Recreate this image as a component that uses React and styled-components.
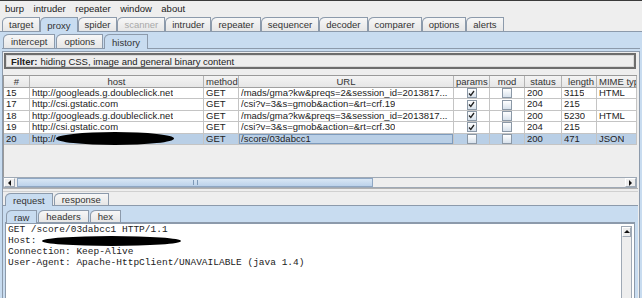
import React from 'react'
import styled, { createGlobalStyle, css } from 'styled-components'

const GlobalStyle = createGlobalStyle`
  html, body {
    margin: 0;
    padding: 0;
    background: #eeeeee;
  }
  body {
    font-family: 'Liberation Sans', Arial, sans-serif;
    font-size: 9.5px;
    color: #333333;
  }
`

const BLUE = '#c8dcf0'
const EDGE = '#8c9aab'

const Window = styled.div`
  width: 642px;
  height: 298px;
  overflow: hidden;
  display: flex;
  flex-direction: column;
  background: #eeeeee;
`

const MenuBar = styled.div`
  height: 16px;
  box-sizing: border-box;
  border-top: 1px solid #3a3a3a;
  display: flex;
  align-items: center;
  gap: 9.5px;
  padding-left: 5px;
  color: #222222;
`

const TabRow = styled.div`
  display: flex;
  align-items: flex-end;
  flex-shrink: 0;
  height: ${p => p.$h}px;
  padding-left: ${p => p.$indent}px;
  gap: ${p => p.$gap ?? 1}px;
  position: relative;
  z-index: 1;
`

const Tab = styled.div`
  height: ${p => p.$h - 1}px;
  padding: 0 ${p => p.$pad || 7}px;
  display: flex;
  align-items: center;
  border: 1px solid ${EDGE};
  border-bottom: none;
  border-top-left-radius: 6px 5px;
  background: linear-gradient(#f7f7f7, #e6e6e6);
  color: #333333;
  white-space: nowrap;
  ${p => p.$selected && css`
    background: ${BLUE};
    height: ${p.$h}px;
    margin-bottom: -1px;
  `}
  ${p => p.$disabled && css`
    color: #a9a9a9;
  `}
`

const Pane = styled.div`
  flex: 1;
  min-height: 0;
  display: flex;
  flex-direction: column;
  background: ${BLUE};
  border-top: 1px solid ${EDGE};
  padding: ${p => p.$pad};
`

const Body = styled.div`
  flex: 1;
  min-height: 0;
  display: flex;
  flex-direction: column;
  background: #eeeeee;
  border: 1px solid ${EDGE};
  border-bottom: none;
  padding: 1px 1px 0 0;
`

const FilterBox = styled.div`
  height: 16px;
  box-sizing: border-box;
  margin-left: 1px;
  width: 632px;
  border: 2px solid #6d6d6d;
  box-shadow: inset 0 0 0 1px #d8d8d8;
  display: flex;
  align-items: center;
  padding-left: 5px;
  color: #222222;
  b {
    margin-right: 3px;
  }
`

const TableViewport = styled.div`
  margin-top: 6px;
  height: 102px;
  width: 634px;
  box-sizing: border-box;
  border-top: 1px solid #9a9a9a;
  border-left: 1px solid #9a9a9a;
`

const Grid = styled.div`
  display: grid;
  grid-template-columns: ${p => p.$cols};
`

const HeadCell = styled.div`
  height: 12px;
  box-sizing: border-box;
  border-right: 1px solid #b4b4b4;
  border-bottom: 1px solid #a0a0a0;
  background: linear-gradient(#f4f4f4, #e6e6e6);
  color: #333333;
  text-align: ${p => p.$align};
  line-height: 11px;
  padding: 0 2px;
  white-space: nowrap;
  overflow: hidden;
`

const Cell = styled.div`
  height: 11.4px;
  box-sizing: border-box;
  border-right: 1px solid #c4c4c4;
  border-bottom: 1px solid #c4c4c4;
  background: ${p => (p.$selected ? '#b9cfe6' : '#ffffff')};
  color: #222222;
  line-height: 10.4px;
  padding: 0 2px;
  white-space: nowrap;
  overflow: visible;
  display: flex;
  align-items: center;
  justify-content: ${p => (p.$center ? 'center' : 'flex-start')};
  ${p => p.$focus && css`
    box-shadow: inset 0 0 0 1px #7d9bbd;
  `}
`

const Clip = styled.span`
  overflow: hidden;
  text-overflow: clip;
  display: block;
`

const Box = styled.span`
  width: 8px;
  height: 8px;
  border: 1px solid #8b98a6;
  background: linear-gradient(#ffffff, #d8e2ec);
  display: flex;
  align-items: center;
  justify-content: center;
`

const Redacted = styled.span`
  display: inline-block;
  width: ${p => p.$w}px;
  height: ${p => p.$h}px;
  background: #000000;
  border-radius: 50%;
  flex-shrink: 0;
`

const HScroll = styled.div`
  height: 11px;
  width: 634px;
  box-sizing: border-box;
  border: 1px solid #9fa9b5;
  background: #eeeeee;
  display: flex;
  align-items: stretch;
`

const ArrowBtn = styled.div`
  width: 11px;
  box-sizing: border-box;
  border: 1px solid #ffffff;
  border-right-color: #9fa9b5;
  border-bottom-color: #9fa9b5;
  display: flex;
  align-items: center;
  justify-content: center;
  background: #eeeeee;
`

const Thumb = styled.div`
  width: 356px;
  margin-left: 2px;
  box-sizing: border-box;
  border: 1px solid #8fa7c3;
  background: linear-gradient(#d9e7f5, #bcd2ea);
  display: flex;
  align-items: center;
  justify-content: center;
`

const Track = styled.div`
  flex: 1;
`

const Grip = styled.span`
  width: 3px;
  height: 5px;
  border-left: 1px solid #7f9ab8;
  border-right: 1px solid #7f9ab8;
`

const Splitter = styled.div`
  height: 3px;
  flex-shrink: 0;
  border-bottom: 1px solid #d0d0d0;
  box-shadow: inset 0 2px 0 -1px #b0b0b0;
`

const Editor = styled.div`
  flex: 1;
  display: flex;
  background: #ffffff;
  border: 1px solid ${EDGE};
  border-bottom: none;
  min-height: 0;
`

const Text = styled.pre`
  flex: 1;
  margin: 0;
  padding: 0 2px;
  font-family: 'Liberation Mono', 'Courier New', monospace;
  font-size: 9.5px;
  line-height: 11px;
  color: #222222;
  div {
    display: flex;
    align-items: center;
    height: 11px;
  }
`

const VScroll = styled.div`
  width: 11px;
  margin: 2px 2px 0 0;
  box-sizing: border-box;
  border: 1px solid #9fa9b5;
  border-bottom: none;
  background: #eeeeee;
  display: flex;
  flex-direction: column;
`

const UpBtn = styled(ArrowBtn)`
  width: auto;
  height: 10px;
`

const Arrow = ({ dir }) => {
  const pts = {
    left: '4,0 4,6 1,3',
    right: '1,0 1,6 4,3',
    up: '0,4 6,4 3,1',
  }[dir]
  return (
    <svg width="6" height="6" viewBox="0 0 6 6">
      <polygon points={pts} fill="#111" />
    </svg>
  )
}

const Check = ({ on }) => (
  <Box>
    {on && (
      <svg width="7" height="7" viewBox="0 0 7 7">
        <path d="M1 3.5 L2.8 5.5 L6 1" stroke="#222" strokeWidth="1.3" fill="none" />
      </svg>
    )}
  </Box>
)

const columns = [
  { key: 'id', title: '#', width: 26, align: 'center' },
  { key: 'host', title: 'host', width: 174, align: 'center' },
  { key: 'method', title: 'method', width: 35, align: 'center' },
  { key: 'url', title: 'URL', width: 215, align: 'center' },
  { key: 'params', title: 'params', width: 36, align: 'center', check: true },
  { key: 'mod', title: 'mod', width: 35, align: 'center', check: true },
  { key: 'status', title: 'status', width: 37, align: 'center' },
  { key: 'length', title: 'length', width: 35, align: 'right' },
  { key: 'mime', title: 'MIME type', width: 40, align: 'left' },
]

const rows = [
  { id: 15, host: 'http://googleads.g.doubleclick.net', method: 'GET', url: '/mads/gma?kw&preqs=2&session_id=2013817...', params: true, mod: false, status: 200, length: 3115, mime: 'HTML' },
  { id: 17, host: 'http://csi.gstatic.com', method: 'GET', url: '/csi?v=3&s=gmob&action=&rt=crf.19', params: true, mod: false, status: 204, length: 215, mime: '' },
  { id: 18, host: 'http://googleads.g.doubleclick.net', method: 'GET', url: '/mads/gma?kw&preqs=3&session_id=2013817...', params: true, mod: false, status: 200, length: 5230, mime: 'HTML' },
  { id: 19, host: 'http://csi.gstatic.com', method: 'GET', url: '/csi?v=3&s=gmob&action=&rt=crf.30', params: true, mod: false, status: 204, length: 215, mime: '' },
  { id: 20, host: 'http://', method: 'GET', url: '/score/03dabcc1', params: false, mod: false, status: 200, length: 471, mime: 'JSON', selected: true, redact: true },
]

const menus = ['burp', 'intruder', 'repeater', 'window', 'about']
const mainTabs = ['target', 'proxy', 'spider', 'scanner', 'intruder', 'repeater', 'sequencer', 'decoder', 'comparer', 'options', 'alerts']

function HistoryTable() {
  const cols = columns.map(c => `${c.width}px`).join(' ')
  return (
    <TableViewport>
      <Grid $cols={cols}>
        {columns.map(c => (
          <HeadCell key={c.key} $align={c.align}>{c.title}</HeadCell>
        ))}
        {rows.map(r =>
          columns.map(c => (
            <Cell
              key={r.id + c.key}
              $selected={r.selected}
              $center={c.check}
              $focus={r.selected && c.key === 'url'}
            >
              {c.check ? (
                <Check on={r[c.key]} />
              ) : c.key === 'host' && r.redact ? (
                <>
                  {r.host}
                  <Redacted $w={118} $h={13} />
                </>
              ) : (
                <Clip>{r[c.key]}</Clip>
              )}
            </Cell>
          ))
        )}
      </Grid>
    </TableViewport>
  )
}

function App() {
  return (
    <>
      <GlobalStyle />
      <Window>
        <MenuBar>
          {menus.map(m => <span key={m}>{m}</span>)}
        </MenuBar>
        <TabRow $h={15} $indent={2} $gap={0}>
          {mainTabs.map(t => (
            <Tab key={t} $h={14} $pad={6} $selected={t === 'proxy'} $disabled={t === 'scanner'}>{t}</Tab>
          ))}
        </TabRow>
        <Pane $pad="1px 2px 0 2px">
          <TabRow $h={15} $indent={1}>
            <Tab $h={14}>intercept</Tab>
            <Tab $h={14}>options</Tab>
            <Tab $h={14} $selected>history</Tab>
          </TabRow>
          <Pane $pad="2px 0 0 0">
            <Body>
              <FilterBox>
                <b>Filter:</b> hiding CSS, image and general binary content
              </FilterBox>
              <HistoryTable />
              <HScroll>
                <ArrowBtn><Arrow dir="left" /></ArrowBtn>
                <Thumb><Grip /></Thumb>
                <Track />
                <ArrowBtn><Arrow dir="right" /></ArrowBtn>
              </HScroll>
              <Splitter />
              <TabRow $h={13} $indent={2}>
                <Tab $h={12} $selected>request</Tab>
                <Tab $h={12}>response</Tab>
              </TabRow>
              <Pane $pad="3px 3px 0 2px">
                <TabRow $h={13} $indent={1}>
                  <Tab $h={12} $selected>raw</Tab>
                  <Tab $h={12}>headers</Tab>
                  <Tab $h={12}>hex</Tab>
                </TabRow>
                <Pane $pad="0">
                  <Editor>
                    <Text>
                      <div>GET /score/03dabcc1 HTTP/1.1</div>
                      <div>Host: <Redacted $w={139} $h={10} /></div>
                      <div>Connection: Keep-Alive</div>
                      <div>User-Agent: Apache-HttpClient/UNAVAILABLE (java 1.4)</div>
                    </Text>
                    <VScroll>
                      <UpBtn><Arrow dir="up" /></UpBtn>
                    </VScroll>
                  </Editor>
                </Pane>
              </Pane>
            </Body>
          </Pane>
        </Pane>
      </Window>
    </>
  )
}

export default App
